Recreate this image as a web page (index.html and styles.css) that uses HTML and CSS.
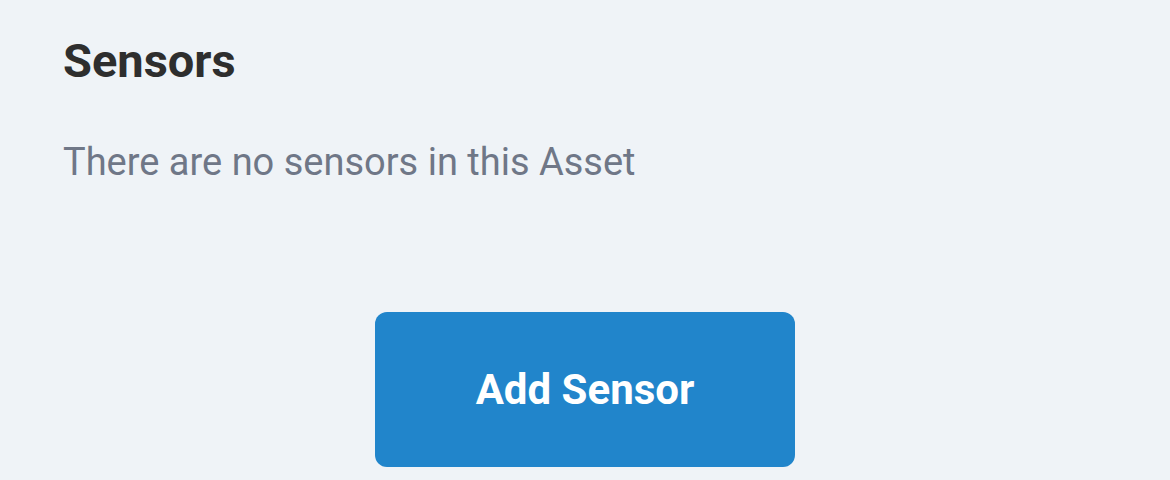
FILE: index.html
```html
<!DOCTYPE html>
<html>
<head>
<meta charset="utf-8">
<link rel="stylesheet" href="styles.css">
</head>
<body>
<main class="page">
  <h1 class="title">Sensors</h1>
  <p class="empty">There are no sensors in this Asset</p>
  <div class="actions">
    <button class="btn-primary">Add Sensor</button>
  </div>
</main>
</body>
</html>
```
FILE: styles.css
```css
html, body {
  margin: 0;
  padding: 0;
  background: #eff3f7;
}
body {
  font-family: Roboto, "Noto Sans", sans-serif;
  width: 1170px;
  height: 480px;
  overflow: hidden;
}
.page {
  padding: 33px 63px 0 63px;
  display: flex;
  flex-direction: column;
}
.title {
  margin: 0;
  font-size: 47px;
  font-weight: 700;
  color: #2e2e2e;
  line-height: 56px;
}
.empty {
  margin: 48px 0 0 0;
  font-size: 38px;
  font-weight: 400;
  color: #6f7787;
  line-height: 50px;
}
.actions {
  display: flex;
  justify-content: center;
  margin-top: 125px;
}
.btn-primary {
  width: 420px;
  height: 155px;
  border: none;
  border-radius: 12px;
  background: #2185cb;
  color: #ffffff;
  font-family: Roboto, "Noto Sans", sans-serif;
  font-size: 42px;
  font-weight: 700;
  padding: 0;
}
```
